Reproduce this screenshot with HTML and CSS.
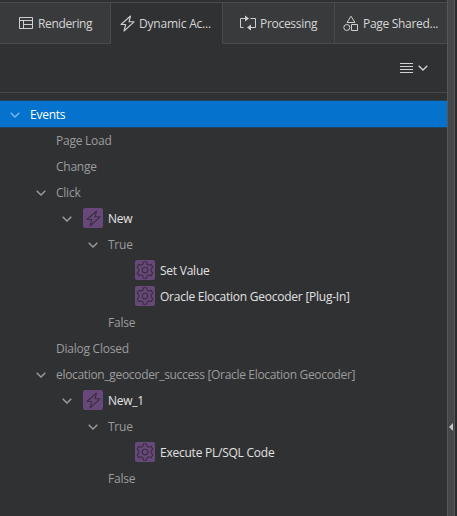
FILE: index.html
```html
<!DOCTYPE html>
<html lang="en">
<head>
<meta charset="utf-8">
<title>Page Designer</title>
<link rel="stylesheet" href="styles.css">
</head>
<body>
<svg class="defs" width="0" height="0">
  <symbol id="chev" viewBox="0 0 10 6"><path d="M.7.7 5 4.9 9.3.7" fill="none" stroke="currentColor" stroke-width="1.4"/></symbol>
  <symbol id="bolt" viewBox="0 0 15 17"><path d="M10.500 1 1 9.500h4.700L4 16 14 6.800H9L10.500 1Z" fill="none" stroke="currentColor" stroke-width="1.100" stroke-linejoin="round"/></symbol>
  <symbol id="gear" viewBox="0 0 16 16"><g fill="none" stroke="currentColor" stroke-linejoin="round"><path d="M6.6.7h2.8l.5 2.1 1.5.9 2.1-.7 1.5 2.5L13.5 7v2l1.5 1.5-1.5 2.5-2.1-.7-1.5.9-.5 2.1H6.6l-.5-2.1-1.5-.9-2.1.7L1 10.500 2.500 9V7L1 5.500 2.500 3l2.100.7 1.500-.9Z"/><circle cx="8" cy="8" r="2.500"/></g></symbol>
</svg>
<div class="app">
  <main class="panel">
    <nav class="tabs">
      <div class="tab t1"><svg width="16" height="14" viewBox="0 0 16 14"><path d="M1.500 1.500h13v11h-13ZM1.500 4.500h13M5.500 4.500v8M5.500 8.500h9" fill="none" stroke="currentColor"/></svg><span>Rendering</span></div>
      <div class="tab t2 active"><svg width="15" height="17"><use href="#bolt"/></svg><span>Dynamic Ac...</span></div>
      <div class="tab t3"><svg width="18" height="16" viewBox="0 0 18 16"><g fill="none" stroke="currentColor"><path d="M4.500 12.500h-3v-9h6M11.500 3.500h5v9h-6"/></g><path d="m6 .5 4 3-4 3ZM12 9.500l-4 3 4 3Z" fill="currentColor"/></svg><span>Processing</span></div>
      <div class="tab t4"><svg width="16" height="16" viewBox="0 0 16 16"><g fill="none" stroke="currentColor"><path d="m8 1.200 4 6.300H4ZM8.500 9.500h6v6h-6Z"/><circle cx="3.800" cy="12.500" r="3"/></g></svg><span>Page Shared...</span></div>
    </nav>
    <div class="toolbar"><svg width="13" height="11" viewBox="0 0 13 11"><path d="M0 .5h13M0 3.500h13M0 6.500h13M0 9.500h13" stroke="currentColor"/></svg><svg width="10" height="6"><use href="#chev"/></svg></div>
    <div class="tree">
      <div class="row l0 selected"><svg class="chev"><use href="#chev"/></svg><span>Events</span></div>
      <div class="row l1 leaf"><span>Page Load</span></div>
      <div class="row l1 leaf"><span>Change</span></div>
      <div class="row l1"><svg class="chev"><use href="#chev"/></svg><span>Click</span></div>
      <div class="row l2 item"><svg class="chev"><use href="#chev"/></svg><i class="ico"><svg width="15" height="17"><use href="#bolt"/></svg></i><span>New</span></div>
      <div class="row l3"><svg class="chev"><use href="#chev"/></svg><span>True</span></div>
      <div class="row l4 item"><i class="ico"><svg width="18" height="18"><use href="#gear"/></svg></i><span>Set Value</span></div>
      <div class="row l4 item"><i class="ico"><svg width="18" height="18"><use href="#gear"/></svg></i><span>Oracle Elocation Geocoder [Plug-In]</span></div>
      <div class="row l3 leaf"><span>False</span></div>
      <div class="row l1 leaf"><span>Dialog Closed</span></div>
      <div class="row l1 long"><svg class="chev"><use href="#chev"/></svg><span>elocation_geocoder_success [Oracle Elocation Geocoder]</span></div>
      <div class="row l2 item"><svg class="chev"><use href="#chev"/></svg><i class="ico"><svg width="15" height="17"><use href="#bolt"/></svg></i><span>New_1</span></div>
      <div class="row l3"><svg class="chev"><use href="#chev"/></svg><span>True</span></div>
      <div class="row l4 item"><i class="ico"><svg width="18" height="18"><use href="#gear"/></svg></i><span>Execute PL/SQL Code</span></div>
      <div class="row l3 leaf"><span>False</span></div>
    </div>
  </main>
  <div class="splitter"><svg width="4" height="8" viewBox="0 0 4 8"><path d="M4 0v8L0 4Z" fill="#c4c4c4"/></svg></div>
  <div class="edge"></div>
</div>
</body>
</html>
```
FILE: styles.css
```css
* { box-sizing: border-box; }
body {
  margin: 0;
  background: #303133;
  color: #d6d6d6;
  font: 12px/26px "Open Sans", "Noto Sans", sans-serif;
  letter-spacing: -0.24px;
  white-space: nowrap;
  overflow: hidden;
}
svg { display: block; flex: none; }
.defs { position: absolute; }
.app { display: flex; height: 516px; }
.panel { width: 447px; padding-top: 2px; }
.tabs { display: flex; height: 42px; border-top: 1px solid #484a4b; }
.tab {
  display: flex;
  align-items: center;
  background: #393a3c;
  border-right: 1px solid #4a4b4d;
  border-bottom: 1px solid #4a4b4d;
}
.tab svg { color: #cfcfcf; }
.tab span { padding-top: 2px; }
.tab.active { background: #303133; border-bottom-color: #303133; }
.t1 { width: 111px; padding-left: 18px; gap: 4px; letter-spacing: -0.35px; }
.t2 { width: 112px; padding-left: 9px; gap: 4px; letter-spacing: -0.2px; }
.t3 { width: 112px; padding-left: 16px; gap: 3px; letter-spacing: -0.3px; }
.t4 { width: 112px; padding-left: 8px; gap: 4px; border-right: 0; letter-spacing: -0.3px; }
.toolbar {
  display: flex;
  align-items: center;
  justify-content: flex-end;
  gap: 5px;
  height: 49px;
  padding-right: 19px;
  border-bottom: 1px solid #47484a;
  color: #d0d0d0;
}
.tree { padding-top: 8px; }
.row { display: flex; align-items: center; height: 26px; color: #9c9c9c; }
.row span { padding-top: 2px; }
.long { letter-spacing: -0.32px; }
.chev { width: 10px; height: 6px; margin: 2px 10px 0 0; }
.l0 { padding-left: 10px; }
.l1 { padding-left: 36px; }
.l2 { padding-left: 62px; }
.l3 { padding-left: 88px; }
.l4 { padding-left: 135px; }
.l1.leaf { padding-left: 56px; }
.l3.leaf { padding-left: 108px; }
.l2 .chev { margin-right: 11px; }
.selected { background: #0572ce; color: #fff; box-shadow: 0 0 0 1px #24445f; }
.selected .chev { color: #79b9ee; }
.item { color: #e2e2e2; }
.item .chev { color: #a0a0a0; }
.ico {
  display: flex;
  align-items: center;
  justify-content: center;
  width: 20px;
  height: 20px;
  margin-right: 5px;
  border-radius: 2px;
  background: #68477a;
  color: #38313e;
}
.splitter {
  display: flex;
  justify-content: center;
  width: 8px;
  padding-top: 423px;
  background: #454648;
  border-left: 1px solid #565759;
  border-right: 1px solid #565759;
}
.edge { width: 2px; background: #292b2d; }
```
